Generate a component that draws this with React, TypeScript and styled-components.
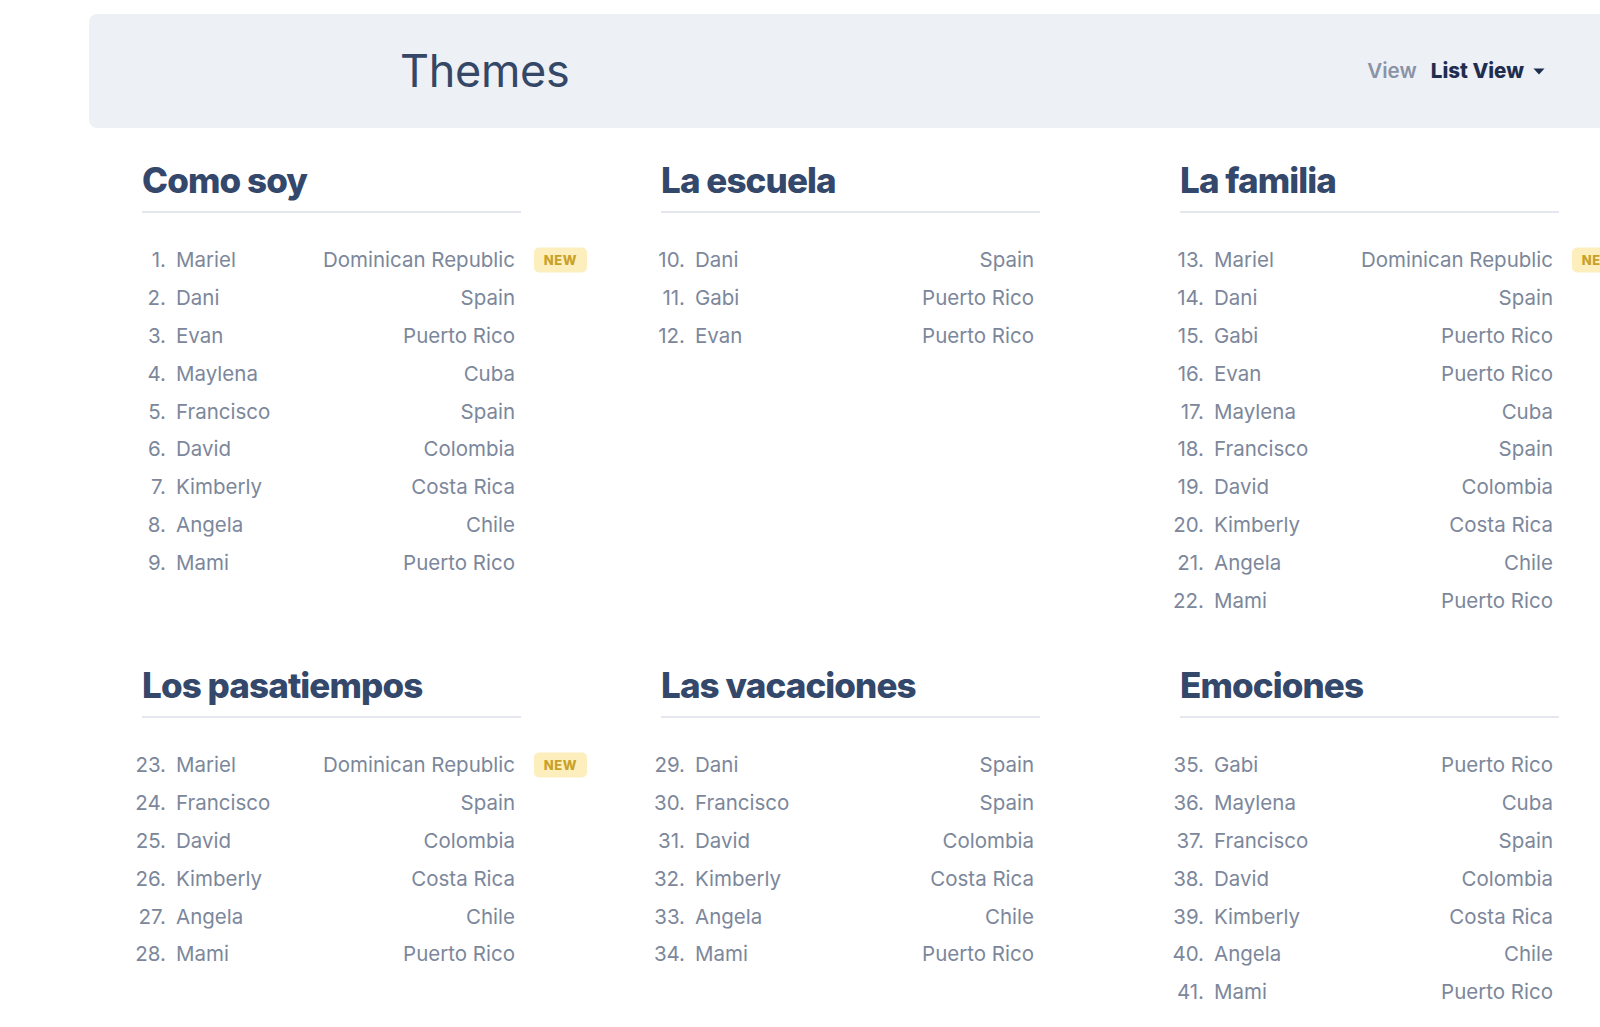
import React from "react";
import styled, { createGlobalStyle } from "styled-components";

const GlobalStyle = createGlobalStyle`
  html, body {
    margin: 0;
    padding: 0;
    background: #ffffff;
    overflow: hidden;
  }
  body {
    font-family: Inter, "Noto Sans", "Liberation Sans", sans-serif;
    -webkit-font-smoothing: antialiased;
  }
`;

const Page = styled.div`
  width: 1700px;
  padding: 14px 0 0 89px;
  box-sizing: border-box;
`;

const Header = styled.header`
  width: 1560px;
  height: 114px;
  box-sizing: border-box;
  background: #edf0f5;
  border-radius: 8px;
  display: flex;
  align-items: center;
  justify-content: space-between;
  padding: 0 104px 0 311px;
`;

const Title = styled.h1`
  margin: 0;
  font-size: 45px;
  font-weight: 400;
  color: #354766;
  letter-spacing: -0.3px;
  line-height: 1;
  padding-bottom: 2px;
`;

const ViewPicker = styled.div`
  display: flex;
  align-items: center;
  gap: 14px;
  font-size: 20.6px;
  line-height: 1;
`;

const ViewLabel = styled.span`
  color: #8a93a6;
  font-weight: 600;
`;

const ViewButton = styled.button`
  display: flex;
  align-items: center;
  gap: 9px;
  border: 0;
  background: transparent;
  padding: 0;
  font: inherit;
  font-weight: 800;
  color: #1f2d4f;
  cursor: pointer;
`;

const Sections = styled.div`
  display: grid;
  grid-template-columns: repeat(3, 379px);
  column-gap: 140px;
  row-gap: 46px;
  padding: 32px 0 0 53px;
`;

const Section = styled.section`
  display: flex;
  flex-direction: column;
`;

const SectionTitle = styled.h2`
  margin: 0;
  font-size: 35px;
  font-weight: 800;
  letter-spacing: -0.9px;
  line-height: 41px;
  color: #34486b;
  padding-bottom: 10px;
  border-bottom: 2px solid #e4e8ee;
`;

const List = styled.ol`
  list-style: none;
  margin: 28px 6px 0 -16px;
  padding: 0;
`;

const Row = styled.li`
  position: relative;
  display: flex;
  align-items: center;
  height: 37.8px;
  font-size: 20.5px;
  color: #7c879b;
`;

const Num = styled.span`
  width: 40px;
  text-align: right;
  flex-shrink: 0;
`;

const Name = styled.span`
  margin-left: 10px;
  flex: 1;
`;

const Country = styled.span`
  text-align: right;
`;

const Badge = styled.span`
  position: absolute;
  left: calc(100% + 19px);
  top: 50%;
  transform: translateY(-50%);
  width: 53px;
  height: 25px;
  border-radius: 5px;
  background: #fcefbd;
  color: #c9a12a;
  font-size: 13px;
  font-weight: 800;
  letter-spacing: 0.6px;
  display: flex;
  align-items: center;
  justify-content: center;
`;

type Item = { n: number; name: string; country: string; isNew?: boolean };

const DR = "Dominican Republic";
const PR = "Puerto Rico";

const sections: { title: string; items: Item[] }[] = [
  {
    title: "Como soy",
    items: [
      { n: 1, name: "Mariel", country: DR, isNew: true },
      { n: 2, name: "Dani", country: "Spain" },
      { n: 3, name: "Evan", country: PR },
      { n: 4, name: "Maylena", country: "Cuba" },
      { n: 5, name: "Francisco", country: "Spain" },
      { n: 6, name: "David", country: "Colombia" },
      { n: 7, name: "Kimberly", country: "Costa Rica" },
      { n: 8, name: "Angela", country: "Chile" },
      { n: 9, name: "Mami", country: PR },
    ],
  },
  {
    title: "La escuela",
    items: [
      { n: 10, name: "Dani", country: "Spain" },
      { n: 11, name: "Gabi", country: PR },
      { n: 12, name: "Evan", country: PR },
    ],
  },
  {
    title: "La familia",
    items: [
      { n: 13, name: "Mariel", country: DR, isNew: true },
      { n: 14, name: "Dani", country: "Spain" },
      { n: 15, name: "Gabi", country: PR },
      { n: 16, name: "Evan", country: PR },
      { n: 17, name: "Maylena", country: "Cuba" },
      { n: 18, name: "Francisco", country: "Spain" },
      { n: 19, name: "David", country: "Colombia" },
      { n: 20, name: "Kimberly", country: "Costa Rica" },
      { n: 21, name: "Angela", country: "Chile" },
      { n: 22, name: "Mami", country: PR },
    ],
  },
  {
    title: "Los pasatiempos",
    items: [
      { n: 23, name: "Mariel", country: DR, isNew: true },
      { n: 24, name: "Francisco", country: "Spain" },
      { n: 25, name: "David", country: "Colombia" },
      { n: 26, name: "Kimberly", country: "Costa Rica" },
      { n: 27, name: "Angela", country: "Chile" },
      { n: 28, name: "Mami", country: PR },
    ],
  },
  {
    title: "Las vacaciones",
    items: [
      { n: 29, name: "Dani", country: "Spain" },
      { n: 30, name: "Francisco", country: "Spain" },
      { n: 31, name: "David", country: "Colombia" },
      { n: 32, name: "Kimberly", country: "Costa Rica" },
      { n: 33, name: "Angela", country: "Chile" },
      { n: 34, name: "Mami", country: PR },
    ],
  },
  {
    title: "Emociones",
    items: [
      { n: 35, name: "Gabi", country: PR },
      { n: 36, name: "Maylena", country: "Cuba" },
      { n: 37, name: "Francisco", country: "Spain" },
      { n: 38, name: "David", country: "Colombia" },
      { n: 39, name: "Kimberly", country: "Costa Rica" },
      { n: 40, name: "Angela", country: "Chile" },
      { n: 41, name: "Mami", country: PR },
    ],
  },
];

const Caret = () => (
  <svg width="12" height="7" viewBox="0 0 12 7" aria-hidden="true">
    <path d="M0.5 0.5 L11.5 0.5 L6 6.5 Z" fill="#1f2d4f" />
  </svg>
);

export default function App() {
  return (
    <>
      <GlobalStyle />
      <Page>
        <Header>
          <Title>Themes</Title>
          <ViewPicker>
            <ViewLabel>View</ViewLabel>
            <ViewButton>
              List View
              <Caret />
            </ViewButton>
          </ViewPicker>
        </Header>
        <Sections>
          {sections.map((s) => (
            <Section key={s.title}>
              <SectionTitle>{s.title}</SectionTitle>
              <List>
                {s.items.map((it) => (
                  <Row key={it.n}>
                    <Num>{it.n}.</Num>
                    <Name>{it.name}</Name>
                    <Country>{it.country}</Country>
                    {it.isNew && <Badge>NEW</Badge>}
                  </Row>
                ))}
              </List>
            </Section>
          ))}
        </Sections>
      </Page>
    </>
  );
}
